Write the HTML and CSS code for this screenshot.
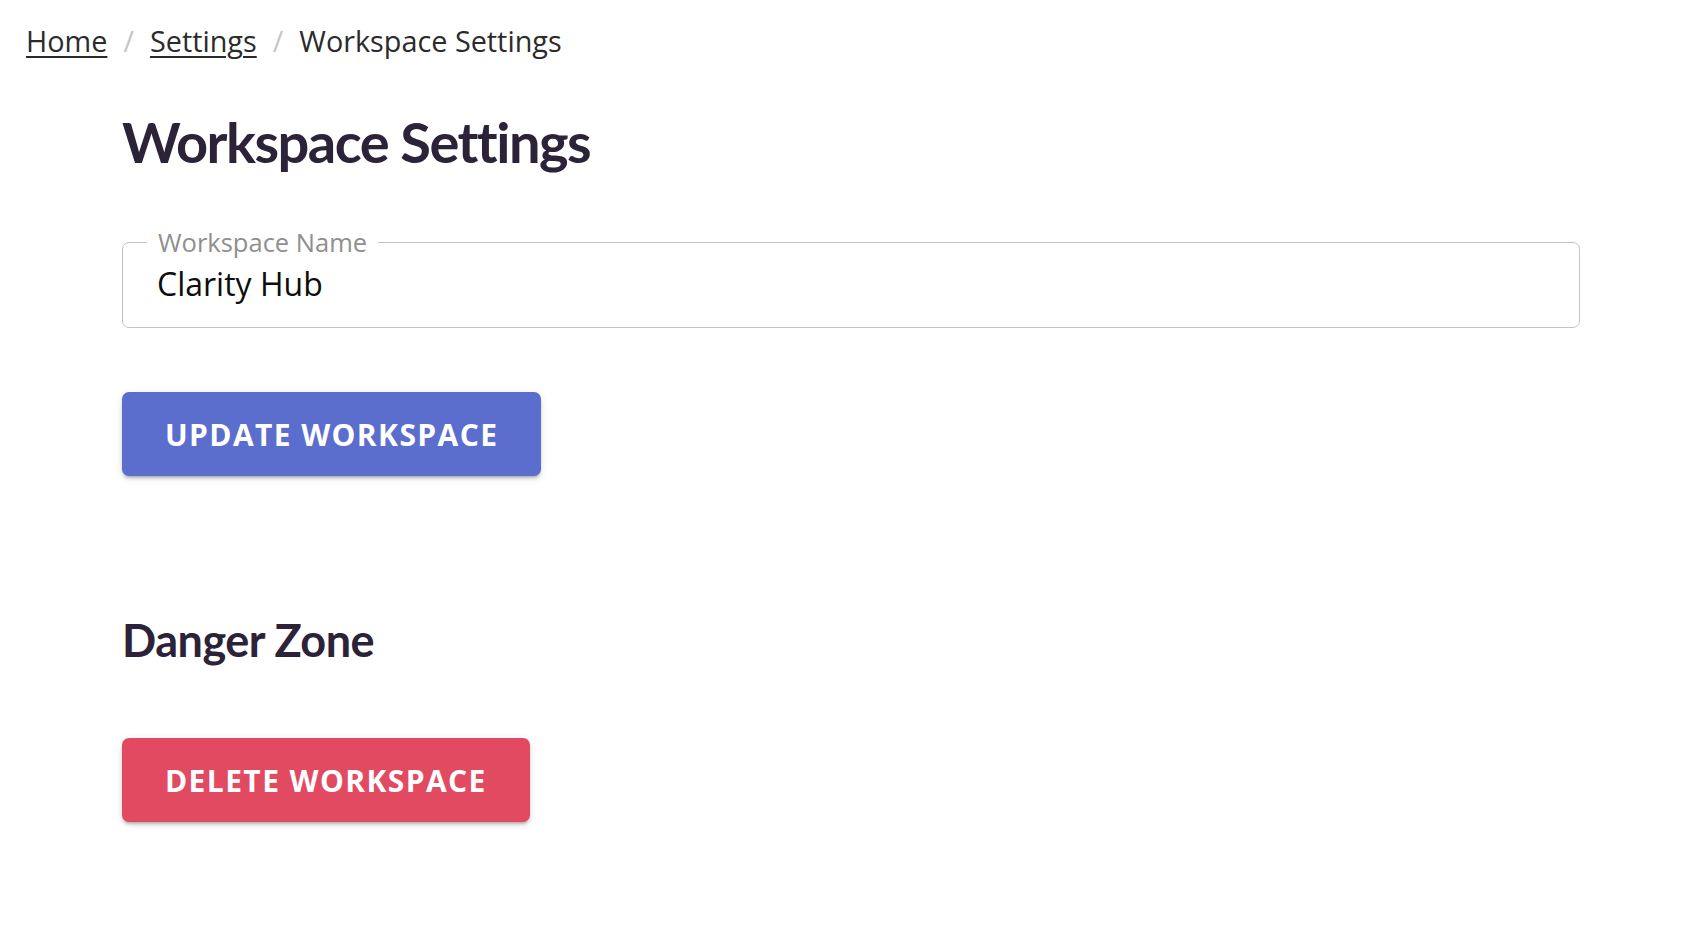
FILE: index.html
```html
<!DOCTYPE html>
<html lang="en">
<head>
<meta charset="utf-8">
<title>Workspace Settings</title>
<link rel="stylesheet" href="styles.css">
</head>
<body>
<nav class="breadcrumbs" aria-label="breadcrumb">
  <ol class="crumbs">
    <li class="crumb"><a class="crumb-link" href="#">Home</a></li>
    <li class="sep" aria-hidden="true">/</li>
    <li class="crumb"><a class="crumb-link" href="#">Settings</a></li>
    <li class="sep" aria-hidden="true">/</li>
    <li class="crumb current">Workspace Settings</li>
  </ol>
</nav>
<main class="page">
  <h1 class="title">Workspace Settings</h1>
  <form class="form">
    <fieldset class="field">
      <legend class="field-label">Workspace Name</legend>
      <input class="field-input" type="text" value="Clarity Hub">
    </fieldset>
    <button type="button" class="btn btn-primary">Update Workspace</button>
  </form>
  <h2 class="subtitle">Danger Zone</h2>
  <button type="button" class="btn btn-danger">Delete Workspace</button>
</main>
</body>
</html>
```
FILE: styles.css
```css
html, body {
  margin: 0;
  padding: 0;
  background: #ffffff;
}

body {
  font-family: "Open Sans", "Liberation Sans", sans-serif;
  color: #2b2b2b;
}

.breadcrumbs {
  padding: 20px 0 0 26px;
}

.crumbs {
  list-style: none;
  margin: 0;
  padding: 0;
  display: flex;
  align-items: baseline;
  font-size: 28.8px;
  line-height: 42px;
}

.crumb-link {
  color: #2b2b2b;
  text-decoration: underline;
  text-underline-offset: 4px;
  text-decoration-thickness: 2px;
}

.current {
  color: #2b2b2b;
}

.sep {
  color: #c6c6c6;
  margin: 0 16px;
}

.page {
  padding: 0 110px 60px 122px;
}

.title {
  margin: 44px 0 0;
  font-family: "Lato", sans-serif;
  font-weight: 700;
  font-size: 56px;
  line-height: 72px;
  letter-spacing: -1.5px;
  color: #2d2339;
}

.form {
  margin: 0;
}

.field {
  margin: 52px 0 0;
  padding: 0 30px 16px 34px;
  border: 1.5px solid #c4c4c4;
  border-radius: 7px;
  min-width: 0;
}

.field-label {
  margin-left: -10px;
  padding: 0 11px;
  font-size: 25.5px;
  line-height: 25px;
  color: #8f8f8f;
}

.field-input {
  display: block;
  width: 100%;
  height: 56px;
  margin: 0;
  padding: 0;
  border: 0;
  outline: none;
  background: transparent;
  font-family: "Open Sans", sans-serif;
  font-size: 32px;
  color: #0d0d0d;
}

.btn {
  display: flex;
  align-items: center;
  height: 84px;
  padding: 0 43px;
  border: 0;
  border-radius: 7px;
  font-family: "Open Sans", sans-serif;
  font-weight: 700;
  font-size: 30px;
  letter-spacing: 1.4px;
  text-transform: uppercase;
  color: #ffffff;
  cursor: pointer;
  box-shadow: 0 4px 2px -3px rgba(0, 0, 0, 0.18), 0 3px 3px 0 rgba(0, 0, 0, 0.12), 0 2px 8px 0 rgba(0, 0, 0, 0.10);
}

.btn-primary {
  margin-top: 64px;
  background: #5b6dcd;
}

.btn-danger {
  margin-top: 70px;
  background: #e14a60;
}

.subtitle {
  margin: 136px 0 0;
  font-family: "Lato", sans-serif;
  font-weight: 700;
  font-size: 45px;
  line-height: 56px;
  letter-spacing: -0.5px;
  color: #2d2339;
}
```
